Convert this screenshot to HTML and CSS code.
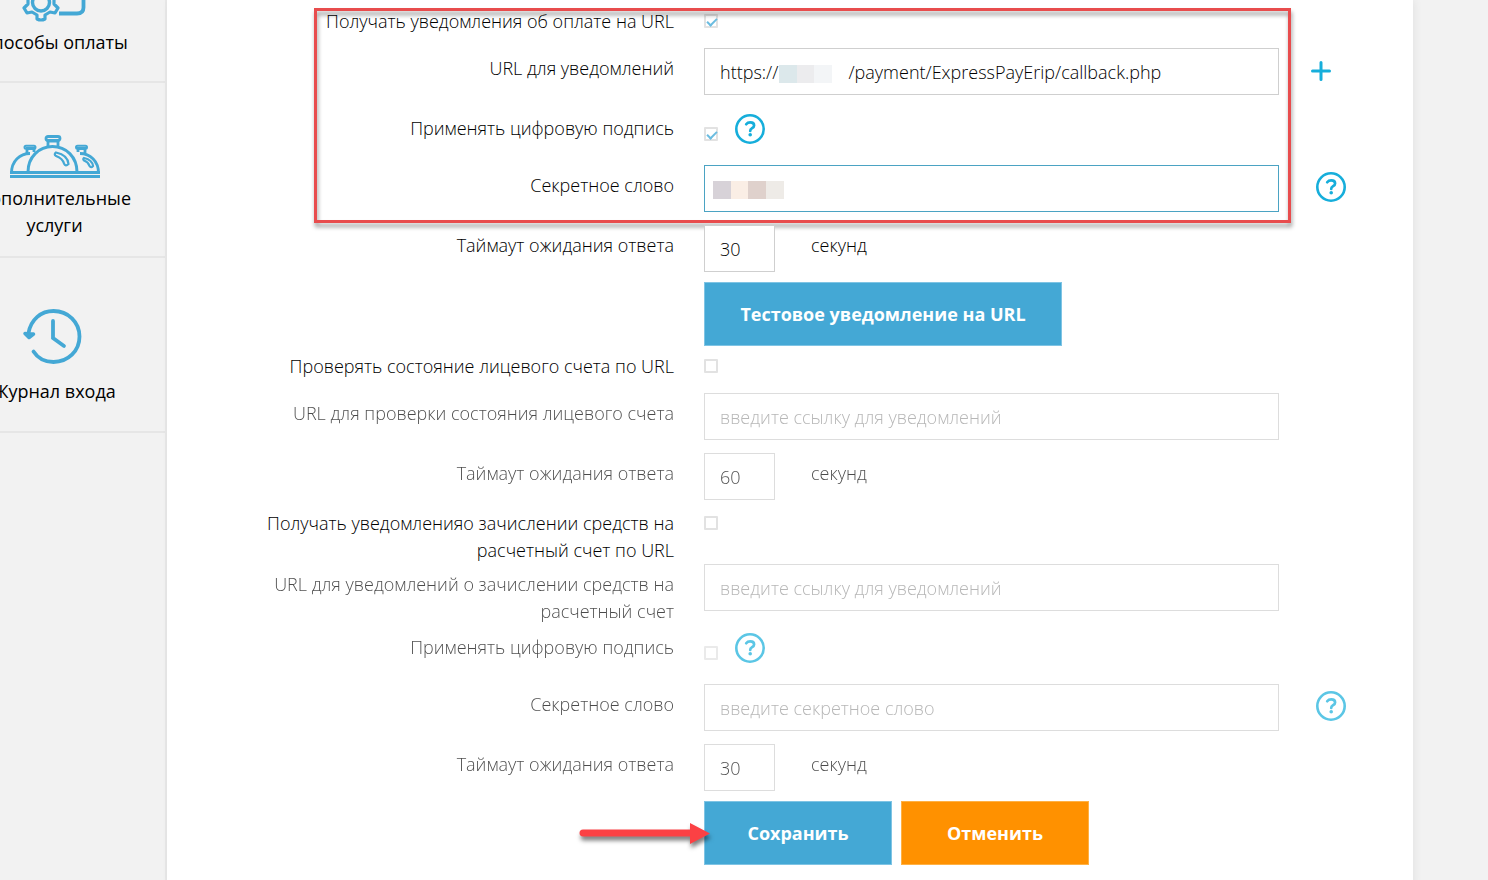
FILE: index.html
```html
<!DOCTYPE html>
<html lang="ru">
<head>
  <meta charset="UTF-8" />
  <meta name="viewport" content="width=device-width, initial-scale=1" />
  <title>Настройки уведомлений</title>
  <link rel="stylesheet" href="styles.css">
</head>
<body>

  <svg width="0" height="0" class="sprite" aria-hidden="true">
    <symbol id="help" viewBox="0 0 30 30">
      <circle cx="15" cy="15" r="13.7" fill="none" stroke="currentColor" stroke-width="2.6" />
      <path d="M11.2 10.2c1-1.3 2.3-1.9 4-1.9 2.3 0 3.9 1.2 3.9 3.1 0 2.9-3.9 2.7-3.9 5.5" fill="none" stroke="currentColor" stroke-width="2.7" stroke-linecap="round" />
      <circle cx="15.2" cy="20.7" r="1.8" fill="currentColor" />
    </symbol>
  </svg>

  <div class="page">
    <nav class="sidebar" aria-label="Меню">
      <a href="#" class="menu-item">
        <svg class="menu-icon" width="64" height="69" viewBox="0 2 64 69" fill="none" stroke="#44a8d5" stroke-width="3.8">
          <path d="M36 55.500H54q6.500 0 6.500-6V22q0-6-6-6H10q-6 0-6 6v16" />
          <circle cx="18" cy="44.500" r="8.500" stroke-width="3.4" />
          <path d="M14 32l1-5h6l1 5 5 2 4-3 4 5-4 4v6l4 4-3 5-5-1-5 3v4q-4 2-8 0v-4l-5-3-5 1-3-5 4-4v-6l-4-4 4-5 4 3z" stroke-width="3.2" stroke-linejoin="round" />
        </svg>
        <span>Способы оплаты</span>
      </a>
      <a href="#" class="menu-item">
        <svg class="menu-icon" width="90" height="50" viewBox="0 0 90 50" fill="none" stroke="#44a8d5" stroke-width="2.8">
          <path d="M0 37.500h90M0 41.500h90" stroke-width="2.800" />
          <path d="M1.500 38C1.500 26 10 18.500 20 18.500M70 18.500C80 18.500 88.500 26 88.500 38" />
          <path d="M18 37C18 22 29 11.500 42.500 11.500S67 22 67 37" stroke-width="3" />
          <path d="M17 18v-4.500h7V17M68 17v-3.500h7V18M38 11V6h10v5" />
          <rect x="14.500" y="10.700" width="11" height="3" rx="1.500" stroke-width="2" />
          <rect x="66" y="10.700" width="11" height="3" rx="1.500" stroke-width="2" />
          <rect x="36" y="1.500" width="14" height="4" rx="2" />
          <path d="M46 17.500c7 1.500 12 5 12.500 11.500q-3 3-4.500-.5c-1-4-4-6-8-7.500q-2.500-2 0-3.500zM74 23c5 1 8.500 4 9 8q-2 2.500-3.500 0c-1-3-2.500-4.500-5.500-5.500q-1.500-1.500 0-2.500z" stroke-width="2.2" />
        </svg>
        <span>Дополнительные услуги</span>
      </a>
      <a href="#" class="menu-item">
        <svg class="menu-icon" width="60" height="68" viewBox="3 1 60 68" fill="none" stroke="#44a8d5" stroke-width="3.8" stroke-linecap="round">
          <path d="M6.500 24C9 10.500 19 2 31.500 2 46 2 57.500 13 57.500 27.500S46 53 31.500 53C23 53 16 49.500 11.500 42.500" />
          <path d="M31 12v17l11 8" />
          <path d="M3 24.500l4 4 4.500-3.500-4.500 0z" fill="#44a8d5" stroke-width="3.500" stroke-linejoin="round" />
        </svg>
        <span>Журнал входа</span>
      </a>
    </nav>

    <main class="content">
      <form class="settings">
        <div class="highlight-group">
          <div class="row">
            <label for="notify">Получать уведомления об оплате на URL</label>
            <div class="control"><input type="checkbox" id="notify" checked></div>
          </div>
          <div class="row field-row">
            <label for="notify-url">URL для уведомлений</label>
            <div class="control">
              <input type="text" id="notify-url" value="https://               /payment/ExpressPayErip/callback.php">
              <span class="mask mask-url"></span>
            </div>
            <button type="button" class="icon-btn add-btn" aria-label="Добавить URL">
              <svg width="20" height="20" viewBox="0 0 20 20" stroke="currentColor" stroke-width="3" stroke-linecap="round"><path d="M10 1.500v17M1.500 10h17" /></svg>
            </button>
          </div>
          <div class="row field-row sign-row">
            <label for="sign">Применять цифровую подпись</label>
            <div class="control">
              <input type="checkbox" id="sign" checked>
              <button type="button" class="icon-btn" aria-label="Справка"><svg width="30" height="30"><use href="#help" /></svg></button>
            </div>
          </div>
          <div class="row field-row">
            <label for="secret">Секретное слово</label>
            <div class="control">
              <input type="text" id="secret" class="active">
              <span class="mask mask-secret"></span>
            </div>
            <button type="button" class="icon-btn help-btn" aria-label="Справка"><svg width="30" height="30"><use href="#help" /></svg></button>
          </div>
          <span class="highlight"></span>
        </div>

        <div class="row field-row time-row">
          <label for="timeout">Таймаут ожидания ответа</label>
          <div class="control"><input type="text" id="timeout" value="30"><span class="unit">секунд</span></div>
        </div>
        <div class="row button-row">
          <div class="control"><button type="button" class="btn btn-wide">Тестовое уведомление на URL</button></div>
        </div>

        <div class="row">
          <label for="check">Проверять состояние лицевого счета по URL</label>
          <div class="control"><input type="checkbox" id="check"></div>
        </div>
        <div class="row field-row inactive">
          <label for="check-url">URL для проверки состояния лицевого счета</label>
          <div class="control"><input type="text" id="check-url" placeholder="введите ссылку для уведомлений" disabled></div>
        </div>
        <div class="row field-row time-row inactive">
          <label for="check-timeout">Таймаут ожидания ответа</label>
          <div class="control"><input type="text" id="check-timeout" value="60" disabled><span class="unit">секунд</span></div>
        </div>

        <div class="row tight">
          <label for="income">Получать уведомленияо зачислении средств на расчетный счет по URL</label>
          <div class="control"><input type="checkbox" id="income"></div>
        </div>
        <div class="row field-row long-row inactive">
          <label for="income-url">URL для уведомлений о зачислении средств на расчетный счет</label>
          <div class="control"><input type="text" id="income-url" placeholder="введите ссылку для уведомлений" disabled></div>
        </div>
        <div class="row field-row sign-row inactive">
          <label for="income-sign">Применять цифровую подпись</label>
          <div class="control">
            <input type="checkbox" id="income-sign" disabled>
            <button type="button" class="icon-btn" aria-label="Справка"><svg width="30" height="30"><use href="#help" /></svg></button>
          </div>
        </div>
        <div class="row field-row inactive">
          <label for="income-secret">Секретное слово</label>
          <div class="control"><input type="text" id="income-secret" placeholder="введите секретное слово" disabled></div>
          <button type="button" class="icon-btn help-btn" aria-label="Справка"><svg width="30" height="30"><use href="#help" /></svg></button>
        </div>
        <div class="row field-row time-row inactive">
          <label for="income-timeout">Таймаут ожидания ответа</label>
          <div class="control"><input type="text" id="income-timeout" value="30" disabled><span class="unit">секунд</span></div>
        </div>

        <div class="row button-row">
          <div class="control">
            <button type="submit" class="btn">Сохранить</button>
            <button type="reset" class="btn btn-cancel">Отменить</button>
            <svg class="arrow" width="134" height="28" viewBox="0 0 134 28" aria-hidden="true">
              <path d="M5 10.500H112V4L132 14.500 112 25V17.500H5a3.500 3.500 0 0 1 0-7z" fill="#fb4144" />
            </svg>
          </div>
        </div>
      </form>
    </main>
  </div>

</body>
</html>
```

FILE: styles.css
```css
:root {
  --primary: #44a8d5;
  --accent: #16aedb;
  --cancel: #ff9100;
  --mark: #e84c4d;
  --bg: #f2f2f2;
  --line: #cfcfcf;
}

* {
  box-sizing: border-box;
}

body {
  margin: 0;
  font-family: "Open Sans", "Noto Sans", sans-serif;
  font-size: 18px;
  line-height: 27px;
  font-weight: 300;
  color: #000;
  background: var(--bg);
  overflow: hidden;
}

.sprite {
  position: absolute;
}

.page {
  display: flex;
  min-height: 100vh;
  margin-left: -58px;
  padding-right: 75px;
}

/* side menu, partly scrolled out of view */
.sidebar {
  flex: 0 0 225px;
  margin-top: -92px;
  border-right: 2px solid #e8e8e8;
}

.menu-item {
  display: flex;
  flex-direction: column;
  align-items: center;
  height: 175px;
  padding: 52px 28px 0 30px;
  border-bottom: 2px solid #e6e6e6;
  color: #000;
  font-weight: 400;
  text-align: center;
  text-decoration: none;
}

.menu-icon {
  flex: none;
  overflow: visible;
}

.content {
  flex: 1;
  min-width: 0;
  background: #fff;
  box-shadow: 2px 0 8px rgba(0, 0, 0, 0.06);
}

.settings {
  padding: 8px 0 15px;
}

.row {
  display: grid;
  grid-template-columns: 507px minmax(0, 1fr) 104px;
  column-gap: 30px;
  align-items: start;
  margin-bottom: 13px;
}

.row label {
  padding-left: 90px;
  text-align: right;
}

.field-row label {
  padding-top: 7px;
}

.control {
  grid-column: 2;
  display: flex;
  position: relative;
}

.time-row {
  margin-bottom: 10px;
}

.button-row {
  margin-bottom: 7px;
}

.tight {
  margin-bottom: 0;
}

.long-row {
  margin-bottom: 2px;
}

.sign-row {
  min-height: 44px;
}

.sign-row .control {
  align-items: flex-end;
  gap: 17px;
  padding-top: 6px;
}

.sign-row input[type="checkbox"] {
  margin: 0 0 3px;
}

.inactive {
  opacity: 0.7;
}

input[type="text"] {
  width: 100%;
  height: 47px;
  padding: 0 15px;
  border: 1px solid var(--line);
  border-radius: 0;
  background: #fff;
  color: #000;
  font: inherit;
  outline: none;
}

input[type="text"].active {
  border-color: #4ba3c3;
}

input::placeholder {
  color: #999;
  opacity: 1;
}

.time-row input[type="text"] {
  width: 71px;
}

.unit {
  margin-left: 36px;
  padding-top: 7px;
}

input[type="checkbox"] {
  appearance: none;
  flex: none;
  width: 14px;
  height: 14px;
  margin: 6px 0 0;
  border: 2px solid #e2e2e2;
  border-radius: 1px;
  background: #fff;
}

input[type="checkbox"]:checked::after {
  content: "";
  display: block;
  width: 8px;
  height: 4px;
  margin: 2px 1px;
  border-left: 2px solid #6bbce0;
  border-bottom: 2px solid #6bbce0;
  transform: rotate(-45deg);
}

.icon-btn {
  display: flex;
  padding: 0;
  border: none;
  background: none;
  color: var(--accent);
  cursor: pointer;
}

.add-btn {
  justify-self: start;
  margin: 13px 0 0 2px;
}

.help-btn {
  justify-self: start;
  margin: 7px 0 0 7px;
}

.btn {
  min-width: 188px;
  height: 64px;
  margin-right: 9px;
  padding: 0 30px;
  border: 1px solid #7fc4e4;
  background: var(--primary);
  color: #fff;
  font: inherit;
  font-weight: 700;
  cursor: pointer;
}

.btn-wide {
  min-width: 358px;
}

.btn-cancel {
  border-color: #ffb144;
  background: var(--cancel);
}

/* hidden parts of the private values */
.mask {
  position: absolute;
  height: 18px;
}

.mask-url {
  top: 17px;
  left: 75px;
  width: 53px;
  background: linear-gradient(90deg, #dce8eb 18px, #ececee 18px 35px, #f3f5f7 35px);
}

.mask-secret {
  top: 16px;
  left: 9px;
  width: 71px;
  background: linear-gradient(90deg, #d7d2d8 18px, #faeee5 18px 35px, #dfd1cc 35px 53px, #eeebe7 53px);
}

/* notes drawn over the form */
.highlight-group {
  position: relative;
}

.highlight {
  position: absolute;
  top: 0;
  right: 122px;
  bottom: -11px;
  left: 147px;
  border: 3px solid var(--mark);
  filter: drop-shadow(1px 4px 2px rgba(0, 0, 0, 0.4));
  pointer-events: none;
}

.arrow {
  position: absolute;
  top: 18px;
  left: -126px;
  overflow: visible;
  filter: drop-shadow(1px 4px 2px rgba(0, 0, 0, 0.5));
}
```
